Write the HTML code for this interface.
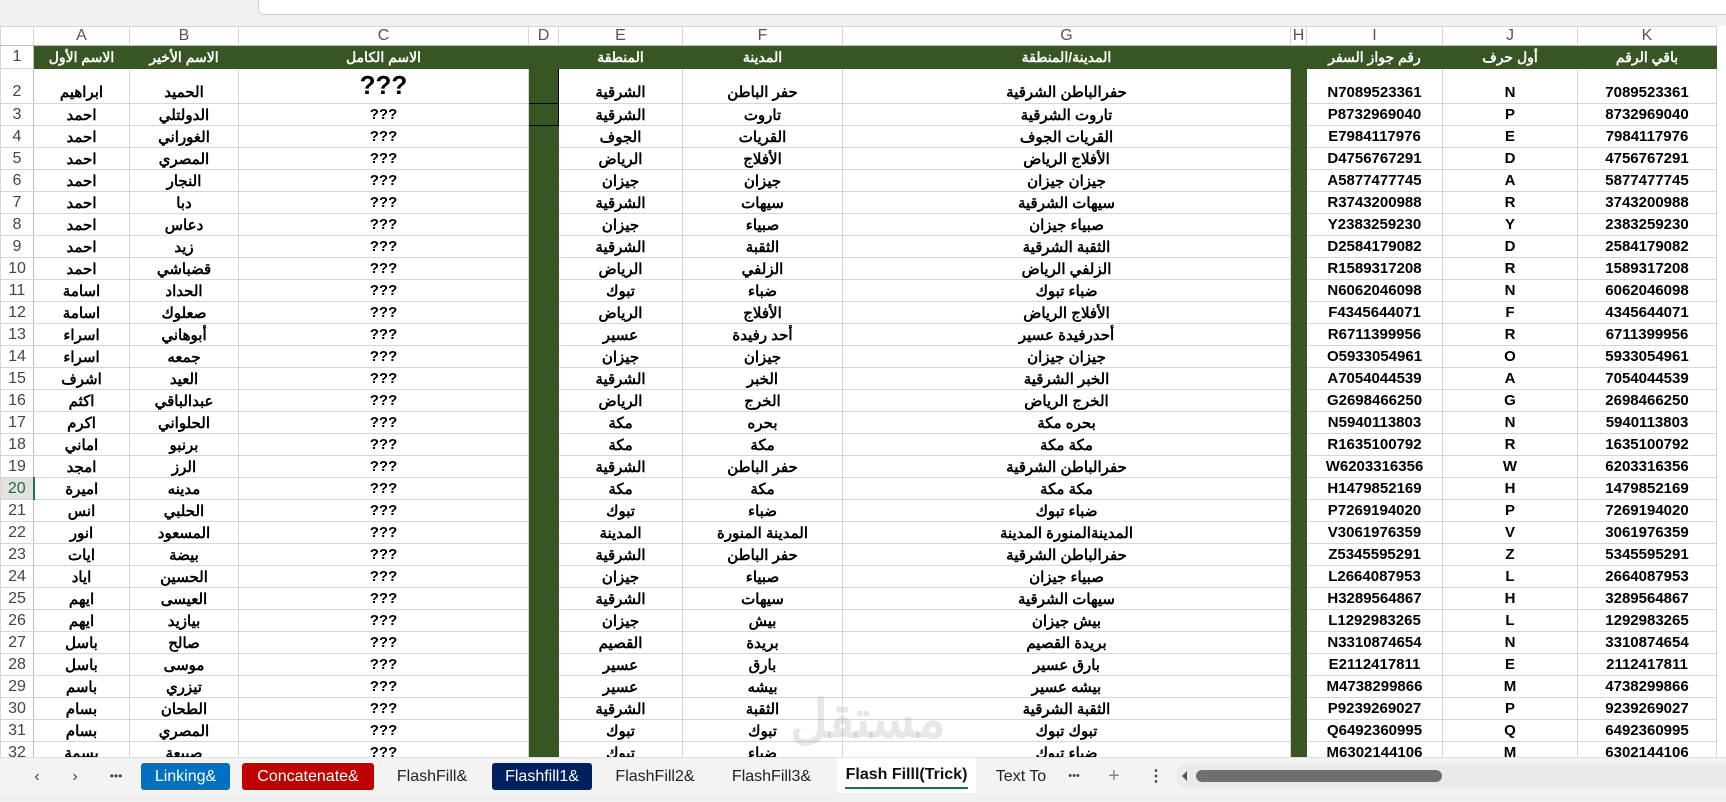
<!DOCTYPE html>
<html><head><meta charset="utf-8"><style>
*{box-sizing:border-box;margin:0;padding:0}
body{width:1726px;height:802px;overflow:hidden;background:#f0f0f0;font-family:"Liberation Sans","Noto Sans CJK SC",sans-serif;position:relative}
.fb{position:absolute;left:258px;top:-2px;width:1480px;height:17px;background:#fff;border:1px solid #d0d0d0;border-radius:0 0 0 6px}
.grid{position:absolute;left:0;top:26px;width:1726px;height:731px;overflow:hidden;background:#fff}
table{border-collapse:collapse;table-layout:fixed;width:1726px}
td,th{border:1px solid #d6d6d6;text-align:center;white-space:nowrap;overflow:hidden;font-weight:bold;font-size:15px;color:#000;height:22px;padding:0}
tr.ch th{height:19px;font-weight:normal;font-size:16px;color:#555;background:#fff;border-color:#d6d6d6;border-bottom:1px solid #bdbdbd}
th.rh{font-weight:normal;font-size:16px;color:#444;background:#fff;border-right:1px solid #bdbdbd}
tr.h td{background:#375623;color:#fff;font-size:14px;height:23px;border-color:#375623}
td.g{background:#375623;border-color:#375623}
td.gd{background:#375623;border:1px solid #000}
tr.r2 td,tr.r2 th{height:35px;vertical-align:bottom;padding-bottom:2px}
.big{font-size:26px}
td.f{border:none}
.tabs{position:absolute;left:0;top:757px;width:1726px;height:36px;background:#f3f3f3;border-top:1px solid #e0e0e0;font-size:16px;color:#222}
.t{position:absolute;top:5px;height:27px;line-height:27px;text-align:center;border-radius:3px}
.bot{position:absolute;left:0;top:793px;width:1726px;height:9px;background:#f0f0f0}
.wm{position:absolute;left:790px;top:690px;font-size:52px;font-weight:bold;color:rgba(120,120,120,.18)}
</style></head><body>
<div class="fb"></div>
<div class="grid">
<table>
<colgroup><col style="width:33px"><col style="width:96px"><col style="width:109px"><col style="width:290px"><col style="width:30px"><col style="width:124px"><col style="width:160px"><col style="width:448px"><col style="width:16px"><col style="width:136px"><col style="width:135px"><col style="width:139px"><col style="width:10px"></colgroup>
<tr class="ch"><th style="background:#fff"></th><th>A</th><th>B</th><th>C</th><th>D</th><th>E</th><th>F</th><th>G</th><th>H</th><th>I</th><th>J</th><th>K</th><th style="border:none"></th></tr>
<tr class="h"><th class="rh">1</th><td>الاسم الأول</td><td>الاسم الأخير</td><td>الاسم الكامل</td><td class="gd"></td><td>المنطقة</td><td>المدينة</td><td>المدينة/المنطقة</td><td></td><td>رقم جواز السفر</td><td>أول حرف</td><td>باقي الرقم</td><td class="f" style="background:#fff"></td></tr>
<tr class="r2"><th class="rh">2</th><td>ابراهيم</td><td>الحميد</td><td class="big">???</td><td class="gd"></td><td>الشرقية</td><td>حفر الباطن</td><td>حفرالباطن الشرقية</td><td class="g"></td><td>N7089523361</td><td>N</td><td>7089523361</td><td class="f"></td></tr>
<tr><th class="rh">3</th><td>احمد</td><td>الدولتلي</td><td>???</td><td class="gd"></td><td>الشرقية</td><td>تاروت</td><td>تاروت الشرقية</td><td class="g"></td><td>P8732969040</td><td>P</td><td>8732969040</td><td class="f"></td></tr>
<tr><th class="rh">4</th><td>احمد</td><td>الغوراني</td><td>???</td><td class="g"></td><td>الجوف</td><td>القريات</td><td>القريات الجوف</td><td class="g"></td><td>E7984117976</td><td>E</td><td>7984117976</td><td class="f"></td></tr>
<tr><th class="rh">5</th><td>احمد</td><td>المصري</td><td>???</td><td class="g"></td><td>الرياض</td><td>الأفلاج</td><td>الأفلاج الرياض</td><td class="g"></td><td>D4756767291</td><td>D</td><td>4756767291</td><td class="f"></td></tr>
<tr><th class="rh">6</th><td>احمد</td><td>النجار</td><td>???</td><td class="g"></td><td>جيزان</td><td>جيزان</td><td>جيزان جيزان</td><td class="g"></td><td>A5877477745</td><td>A</td><td>5877477745</td><td class="f"></td></tr>
<tr><th class="rh">7</th><td>احمد</td><td>دبا</td><td>???</td><td class="g"></td><td>الشرقية</td><td>سيهات</td><td>سيهات الشرقية</td><td class="g"></td><td>R3743200988</td><td>R</td><td>3743200988</td><td class="f"></td></tr>
<tr><th class="rh">8</th><td>احمد</td><td>دعاس</td><td>???</td><td class="g"></td><td>جيزان</td><td>صبياء</td><td>صبياء جيزان</td><td class="g"></td><td>Y2383259230</td><td>Y</td><td>2383259230</td><td class="f"></td></tr>
<tr><th class="rh">9</th><td>احمد</td><td>زيد</td><td>???</td><td class="g"></td><td>الشرقية</td><td>الثقبة</td><td>الثقبة الشرقية</td><td class="g"></td><td>D2584179082</td><td>D</td><td>2584179082</td><td class="f"></td></tr>
<tr><th class="rh">10</th><td>احمد</td><td>قضباشي</td><td>???</td><td class="g"></td><td>الرياض</td><td>الزلفي</td><td>الزلفي الرياض</td><td class="g"></td><td>R1589317208</td><td>R</td><td>1589317208</td><td class="f"></td></tr>
<tr><th class="rh">11</th><td>اسامة</td><td>الحداد</td><td>???</td><td class="g"></td><td>تبوك</td><td>ضباء</td><td>ضباء تبوك</td><td class="g"></td><td>N6062046098</td><td>N</td><td>6062046098</td><td class="f"></td></tr>
<tr><th class="rh">12</th><td>اسامة</td><td>صعلوك</td><td>???</td><td class="g"></td><td>الرياض</td><td>الأفلاج</td><td>الأفلاج الرياض</td><td class="g"></td><td>F4345644071</td><td>F</td><td>4345644071</td><td class="f"></td></tr>
<tr><th class="rh">13</th><td>اسراء</td><td>أبوهاني</td><td>???</td><td class="g"></td><td>عسير</td><td>أحد رفيدة</td><td>أحدرفيدة عسير</td><td class="g"></td><td>R6711399956</td><td>R</td><td>6711399956</td><td class="f"></td></tr>
<tr><th class="rh">14</th><td>اسراء</td><td>جمعه</td><td>???</td><td class="g"></td><td>جيزان</td><td>جيزان</td><td>جيزان جيزان</td><td class="g"></td><td>O5933054961</td><td>O</td><td>5933054961</td><td class="f"></td></tr>
<tr><th class="rh">15</th><td>اشرف</td><td>العيد</td><td>???</td><td class="g"></td><td>الشرقية</td><td>الخبر</td><td>الخبر الشرقية</td><td class="g"></td><td>A7054044539</td><td>A</td><td>7054044539</td><td class="f"></td></tr>
<tr><th class="rh">16</th><td>اكثم</td><td>عبدالباقي</td><td>???</td><td class="g"></td><td>الرياض</td><td>الخرج</td><td>الخرج الرياض</td><td class="g"></td><td>G2698466250</td><td>G</td><td>2698466250</td><td class="f"></td></tr>
<tr><th class="rh">17</th><td>اكرم</td><td>الحلواني</td><td>???</td><td class="g"></td><td>مكة</td><td>بحره</td><td>بحره مكة</td><td class="g"></td><td>N5940113803</td><td>N</td><td>5940113803</td><td class="f"></td></tr>
<tr><th class="rh">18</th><td>اماني</td><td>برنبو</td><td>???</td><td class="g"></td><td>مكة</td><td>مكة</td><td>مكة مكة</td><td class="g"></td><td>R1635100792</td><td>R</td><td>1635100792</td><td class="f"></td></tr>
<tr><th class="rh">19</th><td>امجد</td><td>الرز</td><td>???</td><td class="g"></td><td>الشرقية</td><td>حفر الباطن</td><td>حفرالباطن الشرقية</td><td class="g"></td><td>W6203316356</td><td>W</td><td>6203316356</td><td class="f"></td></tr>
<tr><th class="rh" style="background:#e1e1e1;color:#1e6e3c;border-right:2px solid #217346">20</th><td>اميرة</td><td>مدينه</td><td>???</td><td class="g"></td><td>مكة</td><td>مكة</td><td>مكة مكة</td><td class="g"></td><td>H1479852169</td><td>H</td><td>1479852169</td><td class="f"></td></tr>
<tr><th class="rh">21</th><td>انس</td><td>الحلبي</td><td>???</td><td class="g"></td><td>تبوك</td><td>ضباء</td><td>ضباء تبوك</td><td class="g"></td><td>P7269194020</td><td>P</td><td>7269194020</td><td class="f"></td></tr>
<tr><th class="rh">22</th><td>انور</td><td>المسعود</td><td>???</td><td class="g"></td><td>المدينة</td><td>المدينة المنورة</td><td>المدينةالمنورة المدينة</td><td class="g"></td><td>V3061976359</td><td>V</td><td>3061976359</td><td class="f"></td></tr>
<tr><th class="rh">23</th><td>ايات</td><td>بيضة</td><td>???</td><td class="g"></td><td>الشرقية</td><td>حفر الباطن</td><td>حفرالباطن الشرقية</td><td class="g"></td><td>Z5345595291</td><td>Z</td><td>5345595291</td><td class="f"></td></tr>
<tr><th class="rh">24</th><td>اياد</td><td>الحسين</td><td>???</td><td class="g"></td><td>جيزان</td><td>صبياء</td><td>صبياء جيزان</td><td class="g"></td><td>L2664087953</td><td>L</td><td>2664087953</td><td class="f"></td></tr>
<tr><th class="rh">25</th><td>ايهم</td><td>العيسى</td><td>???</td><td class="g"></td><td>الشرقية</td><td>سيهات</td><td>سيهات الشرقية</td><td class="g"></td><td>H3289564867</td><td>H</td><td>3289564867</td><td class="f"></td></tr>
<tr><th class="rh">26</th><td>ايهم</td><td>بيازيد</td><td>???</td><td class="g"></td><td>جيزان</td><td>بيش</td><td>بيش جيزان</td><td class="g"></td><td>L1292983265</td><td>L</td><td>1292983265</td><td class="f"></td></tr>
<tr><th class="rh">27</th><td>باسل</td><td>صالح</td><td>???</td><td class="g"></td><td>القصيم</td><td>بريدة</td><td>بريدة القصيم</td><td class="g"></td><td>N3310874654</td><td>N</td><td>3310874654</td><td class="f"></td></tr>
<tr><th class="rh">28</th><td>باسل</td><td>موسى</td><td>???</td><td class="g"></td><td>عسير</td><td>بارق</td><td>بارق عسير</td><td class="g"></td><td>E2112417811</td><td>E</td><td>2112417811</td><td class="f"></td></tr>
<tr><th class="rh">29</th><td>باسم</td><td>تيزري</td><td>???</td><td class="g"></td><td>عسير</td><td>بيشه</td><td>بيشه عسير</td><td class="g"></td><td>M4738299866</td><td>M</td><td>4738299866</td><td class="f"></td></tr>
<tr><th class="rh">30</th><td>بسام</td><td>الطحان</td><td>???</td><td class="g"></td><td>الشرقية</td><td>الثقبة</td><td>الثقبة الشرقية</td><td class="g"></td><td>P9239269027</td><td>P</td><td>9239269027</td><td class="f"></td></tr>
<tr><th class="rh">31</th><td>بسام</td><td>المصري</td><td>???</td><td class="g"></td><td>تبوك</td><td>تبوك</td><td>تبوك تبوك</td><td class="g"></td><td>Q6492360995</td><td>Q</td><td>6492360995</td><td class="f"></td></tr>
<tr><th class="rh">32</th><td>بسمة</td><td>صبيعة</td><td>???</td><td class="g"></td><td>تبوك</td><td>ضباء</td><td>ضباء تبوك</td><td class="g"></td><td>M6302144106</td><td>M</td><td>6302144106</td><td class="f"></td></tr>
</table>
</div>
<div class="wm">مستقل</div>
<div class="tabs">
<div class="t" style="left:28px;width:18px;color:#444">&#8249;</div>
<div class="t" style="left:66px;width:18px;color:#444">&#8250;</div>
<div class="t" style="left:104px;width:24px;color:#444;font-size:12px">&#8226;&#8226;&#8226;</div>
<div class="t" style="left:141px;width:89px;background:#0070c0;color:#fff">Linking&amp;</div>
<div class="t" style="left:242px;width:132px;background:#c00000;color:#fff">Concatenate&amp;</div>
<div class="t" style="left:380px;width:104px">FlashFill&amp;</div>
<div class="t" style="left:492px;width:100px;background:#002060;color:#fff">Flashfill1&amp;</div>
<div class="t" style="left:600px;width:110px">FlashFill2&amp;</div>
<div class="t" style="left:715px;width:113px">FlashFill3&amp;</div>
<div class="t" style="left:837px;width:139px;top:0;height:36px;line-height:34px;background:#fff;border-radius:0;font-weight:bold;color:#111">Flash Filll(Trick)<div style="position:absolute;left:8px;right:8px;bottom:5px;height:2px;background:#217346"></div></div>
<div class="t" style="left:985px;width:72px">Text To</div>
<div class="t" style="left:1064px;width:20px;font-size:11px;color:#444">&#8226;&#8226;&#8226;</div>
<div class="t" style="left:1104px;width:20px;color:#888;font-size:20px">+</div>
<div class="t" style="left:1148px;width:14px;color:#444;font-weight:bold">&#8942;</div>
<div style="position:absolute;left:1175px;top:7px;width:551px;height:22px;background:#eaeaea;border-radius:11px 0 0 11px"></div>
<div style="position:absolute;left:1182px;top:13px;width:0;height:0;border-top:5px solid transparent;border-bottom:5px solid transparent;border-right:5px solid #555"></div>
<div style="position:absolute;left:1196px;top:12px;width:246px;height:12px;background:#6f6f6f;border-radius:6px"></div>
</div>
<div class="bot"></div>
</body></html>
